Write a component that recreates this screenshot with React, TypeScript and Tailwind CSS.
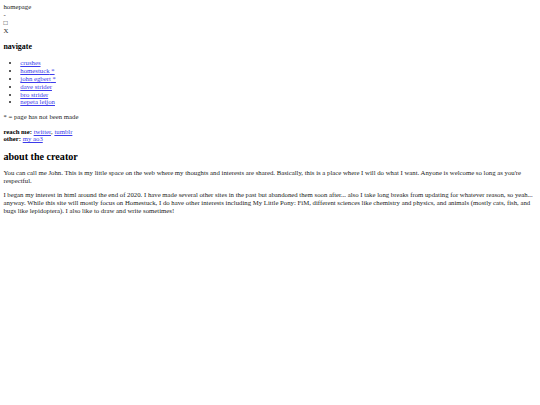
// Plain personal homepage, rendered as an unstyled browser page scaled to the window

const link = 'text-[#3b3bea] underline'

const pages = [
  { name: 'crushes', star: false },
  { name: 'homestuck', star: true },
  { name: 'john egbert', star: true },
  { name: 'dave strider', star: false },
  { name: 'bro strider', star: false },
  { name: 'nepeta leijon', star: false },
]

export default function App() {
  return (
    <div className="min-h-screen bg-white p-[3.4px] text-[6.75px] leading-[7.8px] text-[#222] font-['Liberation_Serif','Times_New_Roman',serif]">
      {/* header bits */}
      <div>homepage</div>
      <div>-</div>
      <div>□</div>
      <div>X</div>

      {/* ── NAVIGATE ─── */}
      <h3 className="my-[7.9px] text-[7.9px] leading-[9.1px] font-bold text-black">navigate</h3>
      <ul className="list-disc pl-[16.9px] my-[6.75px]">
        {pages.map(p => (
          <li key={p.name}>
            <a href="#" className={link}>{p.name}{p.star && ' *'}</a>
          </li>
        ))}
      </ul>
      <p className="my-[6.75px]">* = page has not been made</p>
      <p className="my-[6.75px]">
        <b className="text-black">reach me:</b> <a href="#" className={link}>twitter</a>, <a href="#" className={link}>tumblr</a>
        <br />
        <b className="text-black">other:</b> <a href="#" className={link}>my ao3</a>
      </p>

      {/* ── ABOUT ─── */}
      <h2 className="mt-[7.4px] mb-[6.75px] text-[10.1px] leading-[11.6px] font-bold text-black">about the creator</h2>
      <p className="my-[6.75px]">
        You can call me John. This is my little space on the web where my thoughts and interests are shared. Basically, this is a place where I will do what I want. Anyone is welcome so long as you're respectful.
      </p>
      <p className="my-[6.75px]">
        I began my interest in html around the end of 2020. I have made several other sites in the past but abandoned them soon after... also I take long breaks from updating for whatever reason, so yeah... anyway. While this site will mostly focus on Homestuck, I do have other interests including My Little Pony: FiM, different sciences like chemistry and physics, and animals (mostly cats, fish, and bugs like lepidoptera). I also like to draw and write sometimes!
      </p>
    </div>
  )
}
